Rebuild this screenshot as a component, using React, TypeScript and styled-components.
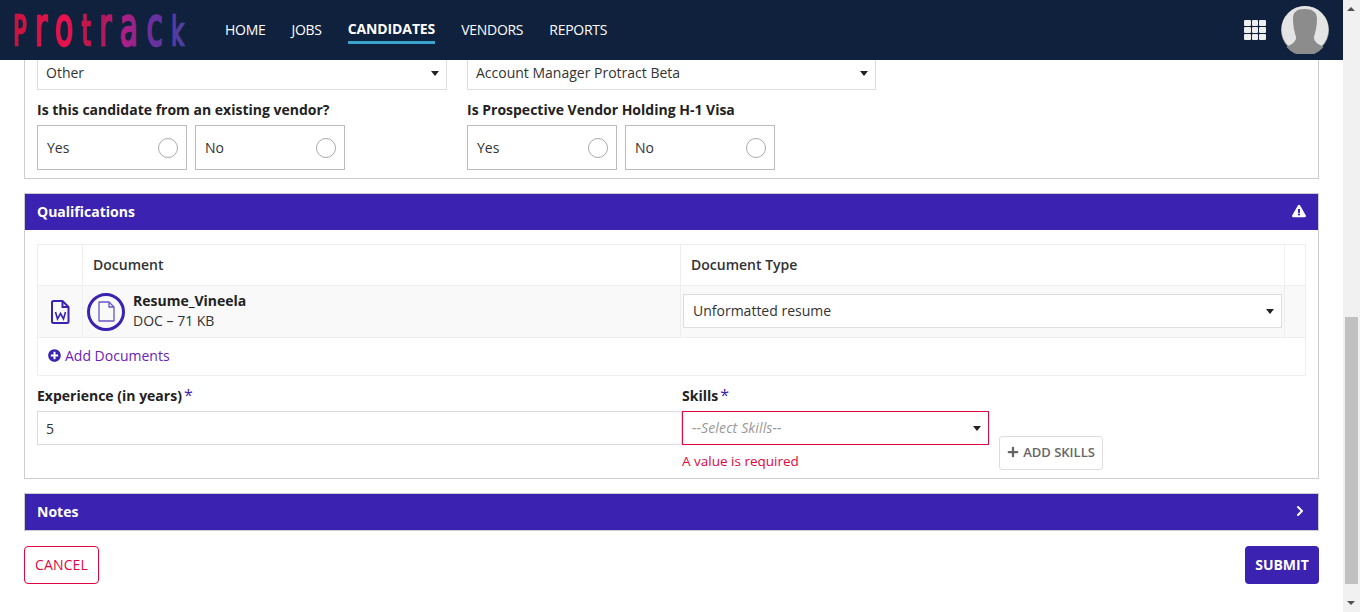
import React from 'react'
import styled, { createGlobalStyle } from 'styled-components'
import { ChevronRight } from 'lucide-react'
import { FaExclamationTriangle, FaPlus, FaPlusCircle } from 'react-icons/fa'

const purple = '#3b22b0'
const crimson = '#e0063f'

const GlobalStyle = createGlobalStyle`
  html, body { margin: 0; padding: 0; background: #fff; overflow: hidden; }
  body { font-family: "Open Sans", "Liberation Sans", sans-serif; font-size: 14px; color: #222; }
  * { box-sizing: border-box; }
`

const Shell = styled.div`
  display: flex;
  width: 1360px;
  height: 612px;
`

const Page = styled.div`
  flex: 1;
  min-width: 0;
  display: flex;
  flex-direction: column;
`

const Header = styled.header`
  height: 60px;
  flex: none;
  background: #0f213d;
  display: flex;
  align-items: center;
  padding: 0 14px;
  position: relative;
  z-index: 2;
`

const Logo = styled.svg`
  width: 182px;
  height: 60px;
  flex: none;
`

const Nav = styled.nav`
  display: flex;
  gap: 26px;
  margin-left: 29px;
`

const NavItem = styled.a<{ $active?: boolean }>`
  color: #fff;
  font-size: 14px;
  font-weight: ${p => (p.$active ? 700 : 400)};
  letter-spacing: ${p => (p.$active ? '-0.12px' : '-0.28px')};
  padding: 4px 0 1px;
  line-height: 20px;
  border-bottom: 3px solid ${p => (p.$active ? '#3aa3cc' : 'transparent')};
  margin-top: ${p => (p.$active ? '-1px' : '0')};
`

const HeaderRight = styled.div`
  margin-left: auto;
  display: flex;
  align-items: center;
  gap: 15px;
`

const Apps = styled.div`
  display: grid;
  grid-template-columns: repeat(3, 1fr);
  grid-auto-rows: 6px;
  gap: 1px;
  width: 22px;
  & > i { background: #eee; border-radius: 1px; }
`

const Avatar = styled.svg`
  width: 48px;
  height: 48px;
  display: block;
`

const Main = styled.main`
  flex: 1;
  overflow: hidden;
  padding: 0 24px;
`

const TopCard = styled.section`
  margin-top: -4px;
  height: 123px;
  border: 1px solid #ccc;
  border-top: 0;
  padding: 0 12px;
`

const FormRow = styled.div`
  display: flex;
  gap: 20px;
`

const Select = styled.div<{ $w: number; $error?: boolean; $placeholder?: boolean; $inset?: number; $lift?: number }>`
  width: ${p => p.$w}px;
  height: 34px;
  border: 1px solid ${p => (p.$error ? crimson : '#ddd')};
  background: #fff;
  display: flex;
  align-items: center;
  justify-content: space-between;
  padding: 0 8px ${p => p.$lift ?? 2}px ${p => p.$inset ?? 8}px;
  font-size: 14px;
  flex: none;
  color: ${p => (p.$placeholder ? '#999' : '#333')};
  font-style: ${p => (p.$placeholder ? 'italic' : 'normal')};
  letter-spacing: ${p => (p.$placeholder ? '0.14px' : '0')};
  &::after {
    content: '';
    border: 4.5px solid transparent;
    border-top: 5px solid #222;
    border-bottom: 0;
    margin: 2px -1px 0 0;
  }
`

const RadioColumn = styled.div<{ $w: number }>`
  width: ${p => p.$w}px;
  flex: none;
`

const Label = styled.div`
  font-weight: 700;
  font-size: 14px;
  line-height: 20px;
  color: #222;
`

const RadioLabel = styled(Label)`
  margin: 10px 0 5px;
`

const RadioGroup = styled.div`
  display: flex;
  gap: 8px;
`

const RadioBox = styled.div`
  width: 150px;
  height: 45px;
  border: 1px solid #bbb;
  display: flex;
  align-items: center;
  justify-content: space-between;
  padding: 0 8px 0 9px;
  color: #333;
  &::after {
    content: '';
    width: 18px;
    height: 18px;
    border: 1px solid #aaa;
    border-radius: 50%;
  }
`

const Panel = styled.section`
  margin-top: 14px;
  border: 1px solid #ccc;
`

const PanelBar = styled.div`
  height: 36px;
  background: ${purple};
  color: #fff;
  font-weight: 700;
  display: flex;
  align-items: center;
  justify-content: space-between;
  padding: 0 12px 2px;
  & > svg.chevron { margin-right: -2px; }
`

const PanelBody = styled.div`
  padding: 14px 12px 8px;
`

const DocTable = styled.div`
  border: 1px solid #eee;
  display: grid;
  grid-template-columns: 45px 598px 604px 1fr;
  grid-template-rows: 41px 52px 37px;
`

const Cell = styled.div<{ $shade?: boolean; $last?: boolean }>`
  border-right: ${p => (p.$last ? '0' : '1px solid #eee')};
  border-bottom: 1px solid #eee;
  background: ${p => (p.$shade ? '#f9f9f9' : '#fff')};
  display: flex;
  align-items: center;
  min-width: 0;
`

const HeadCell = styled(Cell)`
  font-weight: 600;
  color: #333;
  padding: 0 0 2px 10px;
`

const IconCell = styled(Cell)`
  justify-content: center;
  padding-top: 1px;
`

const DocCell = styled(Cell)`
  padding-left: 4px;
  gap: 8px;
`

const DocBadge = styled.div`
  width: 38px;
  height: 38px;
  border: 3px solid ${purple};
  border-radius: 50%;
  display: flex;
  align-items: center;
  justify-content: center;
  flex: none;
`

const DocText = styled.div`
  margin-top: -1px;
`

const DocName = styled.div`
  font-weight: 700;
  line-height: 20px;
  color: #222;
`

const DocMeta = styled.div`
  line-height: 20px;
  color: #333;
`

const TypeCell = styled(Cell)`
  padding: 0 3px 2px 2px;
`

const AddRow = styled.a`
  grid-column: 1 / -1;
  display: flex;
  align-items: center;
  gap: 4px;
  padding: 0 0 3px 10px;
  color: #6a22b8;
`

const FieldRow = styled.div`
  display: flex;
  margin-top: 10px;
`

const Field = styled.div<{ $w: number }>`
  width: ${p => p.$w}px;
  flex: none;
`

const FieldLabel = styled(Label)`
  margin-bottom: 5px;
  & > b { color: ${purple}; font-weight: 400; font-size: 16px; line-height: 1; margin-left: 2px; }
`

const TextInput = styled.div`
  height: 34px;
  border: 1px solid #ddd;
  padding: 0 8px;
  display: flex;
  align-items: center;
  color: #333;
`

const ErrorText = styled.div`
  color: ${crimson};
  font-size: 13.5px;
  line-height: 18px;
  margin-top: 7px;
`

const AddSkills = styled.button`
  align-self: flex-end;
  margin: 0 0 0 10px;
  width: 104px;
  height: 34px;
  border: 1px solid #ddd;
  border-radius: 3px;
  background: #fff;
  color: #666;
  font: 600 13px "Open Sans", sans-serif;
  display: flex;
  align-items: center;
  justify-content: center;
  gap: 4px;
  padding: 0 0 2px;
`

const Actions = styled.div`
  margin-top: 15px;
  display: flex;
  justify-content: space-between;
`

const Cancel = styled.button`
  width: 75px;
  height: 38px;
  border: 1px solid ${crimson};
  border-radius: 4px;
  background: #fff;
  color: ${crimson};
  font: 400 14px "Open Sans", sans-serif;
  letter-spacing: 0.15px;
  padding: 0 0 2px;
`

const Submit = styled.button`
  width: 74px;
  height: 38px;
  border: 0;
  border-radius: 4px;
  background: ${purple};
  color: #fff;
  font: 700 14px "Open Sans", sans-serif;
  padding: 0 0 2px;
`

const Scrollbar = styled.div`
  width: 17px;
  flex: none;
  background: #f1f1f1;
  display: flex;
  flex-direction: column;
  align-items: center;
  padding-top: 317px;
  position: relative;
`

const Thumb = styled.div`
  width: 13px;
  height: 267px;
  background: #c1c1c1;
`

const Arrow = styled.i<{ $up?: boolean }>`
  position: absolute;
  left: 4px;
  ${p => (p.$up ? 'top: 7px;' : 'bottom: 7px;')}
  border: 4px solid transparent;
  border-bottom: ${p => (p.$up ? '4px solid #505050' : '0')};
  border-top: ${p => (p.$up ? '0' : '4px solid #505050')};
  border-left-width: 4.5px;
  border-right-width: 4.5px;
`

export default function App() {
  return (
    <>
      <GlobalStyle />
      <Shell>
        <Page>
          <Header>
            <Logo viewBox="0 0 182 60">
              <defs>
                <linearGradient id="logoGrad" gradientUnits="userSpaceOnUse" x1="0" x2="313" y1="0" y2="0">
                  <stop offset="0" stopColor="#c8143f" />
                  <stop offset="0.3" stopColor="#e8124f" />
                  <stop offset="0.48" stopColor="#b0184f" />
                  <stop offset="0.62" stopColor="#b81c80" />
                  <stop offset="0.8" stopColor="#6a309c" />
                  <stop offset="1" stopColor="#4a40a4" />
                </linearGradient>
              </defs>
              <text y="45" x="-2" transform="scale(0.55 1)" fill="url(#logoGrad)" stroke="url(#logoGrad)" strokeWidth="2.5" letterSpacing="15.5" fontFamily="'DejaVu Sans', sans-serif" fontSize="54">
                <tspan fontSize="40">P</tspan>ro<tspan fontSize="42">t</tspan>rac<tspan fontSize="39">k</tspan>
              </text>
            </Logo>
            <Nav>
              <NavItem>HOME</NavItem>
              <NavItem>JOBS</NavItem>
              <NavItem $active>CANDIDATES</NavItem>
              <NavItem>VENDORS</NavItem>
              <NavItem>REPORTS</NavItem>
            </Nav>
            <HeaderRight>
              <Apps>{Array.from({ length: 9 }, (_, i) => <i key={i} />)}</Apps>
              <Avatar viewBox="0 0 48 48">
                <circle cx="24" cy="24" r="24" fill="#8c8c8c" />
                <circle cx="24" cy="23.500" r="23.500" fill="#e4e4e4" />
                <path d="M23.500 3c8 0 12.500 3 12.500 10 0 7-1.500 13-3 18-.5 3 2 6 5 7.500 2 1 3.500 1.500 4.500 2.500a24 24 0 0 1-37 0c1-1 2.500-1.500 4.500-2.500 3-1.500 5.500-4.500 5-7.500-1.500-5-3-11-3-18 0-7 3.500-10 11.500-10z" fill="#8c8c8c" />
              </Avatar>
            </HeaderRight>
          </Header>
          <Main>
            <TopCard>
              <FormRow>
                <Select $w={410}>Other</Select>
                <Select $w={409}>Account Manager Protract Beta</Select>
              </FormRow>
              <FormRow>
                <RadioColumn $w={410}>
                  <RadioLabel>Is this candidate from an existing vendor?</RadioLabel>
                  <RadioGroup>
                    <RadioBox>Yes</RadioBox>
                    <RadioBox>No</RadioBox>
                  </RadioGroup>
                </RadioColumn>
                <RadioColumn $w={409}>
                  <RadioLabel>Is Prospective Vendor Holding H-1 Visa</RadioLabel>
                  <RadioGroup>
                    <RadioBox>Yes</RadioBox>
                    <RadioBox>No</RadioBox>
                  </RadioGroup>
                </RadioColumn>
              </FormRow>
            </TopCard>
            <Panel>
              <PanelBar>
                Qualifications
                <FaExclamationTriangle size={14} color="#fff" />
              </PanelBar>
              <PanelBody>
                <DocTable>
                  <HeadCell />
                  <HeadCell>Document</HeadCell>
                  <HeadCell>Document Type</HeadCell>
                  <HeadCell $last />
                  <IconCell $shade>
                    <svg width="19" height="24" viewBox="0 0 19 24" fill="none" stroke={purple} strokeWidth="2">
                      <path d="M2.500 1h9l6 6v14.500a1.500 1.500 0 0 1-1.500 1.500h-13.500a1.500 1.500 0 0 1-1.500-1.500v-19a1.500 1.500 0 0 1 1.500-1.500z" strokeLinejoin="round" />
                      <path d="M11.500 1v6h6" />
                      <path d="M4.500 12l2 7 3-5.500 3 5.500 2-7" strokeWidth="1.600" />
                    </svg>
                  </IconCell>
                  <DocCell $shade>
                    <DocBadge>
                      <svg width="17" height="21" viewBox="0 0 17 21" fill="none" stroke="#6a55c4" strokeWidth="1.300">
                        <path d="M1 1h10l5 5v14h-15z" strokeLinejoin="round" />
                        <path d="M11 1v5h5" />
                      </svg>
                    </DocBadge>
                    <DocText>
                      <DocName>Resume_Vineela</DocName>
                      <DocMeta>DOC – 71 KB</DocMeta>
                    </DocText>
                  </DocCell>
                  <TypeCell $shade>
                    <Select $w={599} $inset={9} $lift={0}>Unformatted resume</Select>
                  </TypeCell>
                  <Cell $shade $last />
                  <AddRow>
                    <FaPlusCircle size={13} color={purple} />
                    Add Documents
                  </AddRow>
                </DocTable>
                <FieldRow>
                  <Field $w={645}>
                    <FieldLabel>Experience (in years)<b>*</b></FieldLabel>
                    <TextInput>5</TextInput>
                  </Field>
                  <Field $w={307}>
                    <FieldLabel>Skills<b>*</b></FieldLabel>
                    <Select $w={307} $error $placeholder $inset={9}>--Select Skills--</Select>
                    <ErrorText>A value is required</ErrorText>
                  </Field>
                  <AddSkills>
                    <FaPlus size={12} color="#666" />
                    ADD SKILLS
                  </AddSkills>
                </FieldRow>
              </PanelBody>
            </Panel>
            <Panel>
              <PanelBar>
                Notes
                <ChevronRight className="chevron" size={16} strokeWidth={3} color="#fff" />
              </PanelBar>
            </Panel>
            <Actions>
              <Cancel>CANCEL</Cancel>
              <Submit>SUBMIT</Submit>
            </Actions>
          </Main>
        </Page>
        <Scrollbar>
          <Arrow $up />
          <Thumb />
          <Arrow />
        </Scrollbar>
      </Shell>
    </>
  )
}
